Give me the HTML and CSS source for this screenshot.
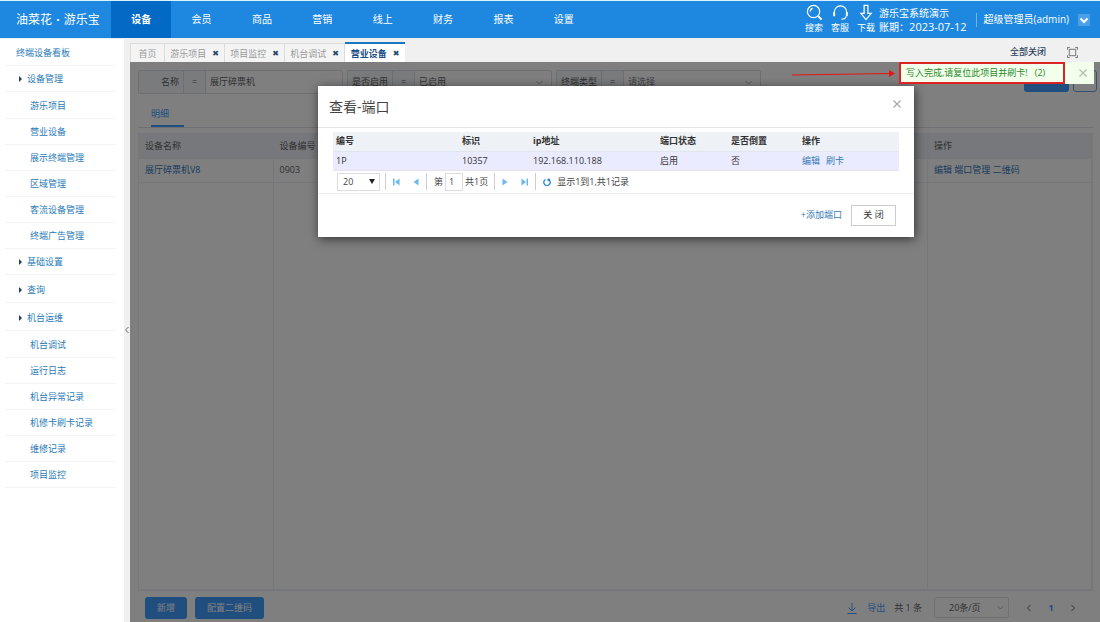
FILE: index.html
```html
<!DOCTYPE html>
<html lang="zh-CN">
<head>
<meta charset="utf-8">
<meta name="viewport" content="width=device-width, initial-scale=1">
<title>油菜花 · 游乐宝</title>
<link rel="stylesheet" href="styles.css">
</head>
<body>
<header class="topbar">
  <div class="brand">油菜花 <span class="dot">·</span> 游乐宝</div>
  <nav class="mainnav">
    <a href="#" class="active">设备</a><a href="#">会员</a><a href="#">商品</a><a href="#">营销</a><a href="#">线上</a><a href="#">财务</a><a href="#">报表</a><a href="#">设置</a>
  </nav>
  <div class="tools">
    <a href="#" class="tool"><svg viewBox="0 0 18 18"><circle cx="8" cy="8" r="6.5"/><path d="M4.5 8A3.5 3.5 0 0 1 7 4.6"/><path class="thick" d="M13 13l3.500 3.500"/></svg>搜索</a>
    <a href="#" class="tool"><svg viewBox="0 0 18 18"><path d="M2.500 11V8.500a6.500 6.500 0 0 1 13 0V11"/><path class="thick" d="M2.300 8.500v4.500M15.700 8.500v4.500"/><path d="M15 13c-.5 2-2.500 3-5 3"/></svg>客服</a>
    <a href="#" class="tool"><svg viewBox="0 0 18 18"><path d="M6.500 1.500h4v8.500h3.500L8.500 16.500 3 10h3.500z"/></svg>下载</a>
  </div>
  <div class="tenant"><div>游乐宝系统演示</div><div>账期：<span class="date">2023-07-12</span></div></div>
  <div class="user">超级管理员(admin)</div>
  <button class="usermenu" aria-label="用户菜单"><svg viewBox="0 0 12 12"><path d="M2.500 4.500L6 8l3.500-3.500"/></svg></button>
</header>
<div class="layout">
  <aside class="sidebar">
    <ul>
      <li><a href="#" class="root">终端设备看板</a></li>
      <li><a href="#" class="group">设备管理</a>
        <ul class="sub">
          <li><a href="#">游乐项目</a></li>
          <li><a href="#">营业设备</a></li>
          <li><a href="#">展示终端管理</a></li>
          <li><a href="#">区域管理</a></li>
          <li><a href="#">客流设备管理</a></li>
          <li><a href="#">终端广告管理</a></li>
        </ul>
      </li>
      <li><a href="#" class="group">基础设置</a></li>
      <li class="spaced"><a href="#" class="group">查询</a></li>
      <li class="spaced"><a href="#" class="group">机台运维</a>
        <ul class="sub">
          <li><a href="#">机台调试</a></li>
          <li><a href="#">运行日志</a></li>
          <li><a href="#">机台异常记录</a></li>
          <li><a href="#">机修卡刷卡记录</a></li>
          <li><a href="#">维修记录</a></li>
          <li><a href="#">项目监控</a></li>
        </ul>
      </li>
    </ul>
  </aside>
  <button class="splitter" aria-label="收起菜单"><svg viewBox="0 0 6 8"><path d="M4.500 1L1.500 4l3 3"/></svg></button>
  <main class="main">
    <div class="tabs">
      <div class="tab home"><a href="#">首页</a></div>
      <div class="tab"><a href="#">游乐项目</a><button aria-label="关闭游乐项目">✖</button></div>
      <div class="tab"><a href="#">项目监控</a><button aria-label="关闭项目监控">✖</button></div>
      <div class="tab"><a href="#">机台调试</a><button aria-label="关闭机台调试">✖</button></div>
      <div class="tab current"><a href="#">营业设备</a><button aria-label="关闭营业设备">✖</button></div>
      <button class="closeall">全部关闭</button>
      <button class="fullscreen" aria-label="全屏"><svg viewBox="0 0 12 12"><path d="M2.500 2.500h7v7h-7zM.500 3V.500H3M9 .500h2.500V3M11.500 9v2.500H9M3 11.500H.500V9"/></svg></button>
    </div>
    <section class="workspace">
      <form class="filters">
        <div class="field"><label for="f-name">名称</label><span class="op">=</span><input id="f-name" type="text" value="展厅碎票机"></div>
        <div class="field"><label for="f-on">是否启用</label><span class="op">=</span><select id="f-on"><option>已启用</option></select></div>
        <div class="field"><label for="f-type">终端类型</label><span class="op">=</span><select id="f-type" class="empty"><option>请选择</option></select></div>
        <div class="actions"><button type="button" class="primary" aria-label="查询"></button><button type="button" class="more" aria-label="更多"></button></div>
      </form>
      <div class="detailtabs"><a href="#">明细</a></div>
      <div class="grid">
        <table>
          <colgroup><col class="c-name"><col><col class="c-ops"></colgroup>
          <thead><tr><th>设备名称</th><th>设备编号</th><th>操作</th></tr></thead>
          <tbody>
            <tr><td><a href="#">展厅碎票机V8</a></td><td>0903</td><td><a href="#">编辑</a> <a href="#">端口管理</a> <a href="#">二维码</a></td></tr>
            <tr class="filler"><td></td><td></td><td></td></tr>
          </tbody>
        </table>
      </div>
      <footer class="gridfoot">
        <button class="primary">新增</button><button class="primary">配置二维码</button>
        <div class="paging">
          <a href="#" class="export"><svg viewBox="0 0 10 12"><path d="M5 1v8M1.500 5.500L5 9l3.500-3.500M.500 11.500h9"/></svg>导出</a>
          <span>共 1 条</span>
          <select aria-label="每页条数"><option>20条/页</option></select>
          <button aria-label="上一页"><svg viewBox="0 0 6 8"><path d="M4.500 1L1.500 4l3 3"/></svg></button>
          <b>1</b>
          <button aria-label="下一页"><svg viewBox="0 0 6 8"><path d="M1.500 1l3 3-3 3"/></svg></button>
        </div>
      </footer>
      <div class="overlay">
        <div class="modal" role="dialog" aria-labelledby="dlg-title">
          <div class="modalhead"><h2 id="dlg-title">查看-端口</h2><button aria-label="关闭对话框"><svg viewBox="0 0 8 8"><path d="M.500 .500l7 7M7.500 .500l-7 7"/></svg></button></div>
          <div class="modalbody">
            <table class="ports">
              <colgroup><col class="p1"><col class="p2"><col class="p3"><col class="p2"><col class="p2"><col></colgroup>
              <thead><tr><th>编号</th><th>标识</th><th>ip地址</th><th>端口状态</th><th>是否倒置</th><th>操作</th></tr></thead>
              <tbody><tr><td>1P</td><td>10357</td><td>192.168.110.188</td><td>启用</td><td>否</td><td><a href="#">编辑</a><a href="#">刷卡</a></td></tr></tbody>
            </table>
            <div class="pager">
              <select aria-label="每页行数"><option>20</option></select>
              <i></i>
              <button aria-label="首页"><svg viewBox="0 0 8 8"><path d="M1 .500h1.500v7H1zM7.500 .500v7L3 4z"/></svg></button>
              <button aria-label="上一页"><svg viewBox="0 0 8 8"><path d="M6.500 .500v7L1.500 4z"/></svg></button>
              <i></i>
              <label class="pageno">第<input type="text" value="1"></label><span class="total">共1页</span>
              <i></i>
              <button aria-label="下一页"><svg viewBox="0 0 8 8"><path d="M1.500 .500v7L6.500 4z"/></svg></button>
              <button aria-label="末页"><svg viewBox="0 0 8 8"><path d="M5.500 .500H7v7H5.500zM.500 .500v7L5 4z"/></svg></button>
              <i></i>
              <button class="reload" aria-label="刷新"><svg viewBox="0 0 8 8"><path d="M2.500 1.500A3.200 3.200 0 1 0 5.500 1.500M5.200 3.200V1.300H7.200"/></svg></button>
              <span class="summary">显示1到1,共1记录</span>
            </div>
          </div>
          <div class="modalfoot"><a href="#">+添加端口</a><button>关 闭</button></div>
        </div>
      </div>
      <svg class="arrow" viewBox="0 0 106 10"><path d="M1 6L100 4.500" stroke="#e81414" fill="none"/><path d="M98 1l6 3.500-6 3.500z" fill="#e81414" stroke="none"/></svg>
      <div class="toast" role="status"><div class="message">写入完成,请复位此项目并刷卡!&nbsp;&nbsp; (2)</div><button aria-label="关闭提示"><svg viewBox="0 0 8 8"><path d="M.500 .500l7 7M7.500 .500l-7 7"/></svg></button></div>
    </section>
  </main>
</div>
</body>
</html>
```

FILE: styles.css
```css
* { box-sizing: border-box; }
body {
  margin: 0; height: 100vh; display: flex; flex-direction: column; overflow: hidden;
  font: 9px/12px "Open Sans", "Noto Sans CJK SC", sans-serif; color: #333; background: #fff;
}
a { color: #337ab7; text-decoration: none; }
ul { list-style: none; margin: 0; padding: 0; }
button, input, select { font: inherit; color: inherit; margin: 0; padding: 0; border: 0; background: none; border-radius: 0; }
select { appearance: none; }
svg { display: block; fill: none; stroke: currentColor; }
table { border-collapse: collapse; width: 100%; table-layout: fixed; }
th, td { text-align: left; font-weight: normal; }

.topbar { display: flex; flex: none; height: 38px; align-items: stretch; background: #1e88e1; color: #fff; border-top: 1px solid #d9f3fd; }
.brand { width: 111px; padding-left: 16px; font-size: 12px; line-height: 37px; white-space: nowrap; }
.dot { margin: 0 1px; font-weight: bold; }
.mainnav { display: flex; width: 483px; margin-right: auto; }
.mainnav a { flex: 1; text-align: center; color: #fff; font-size: 10px; line-height: 37px; }
.mainnav .active { background: #0269c4; font-weight: bold; }
.tools { display: flex; gap: 8px; }
.tool { display: flex; flex-direction: column; align-items: center; color: #fff; gap: 1px; padding-top: 3px; }
.tool svg { width: 17px; height: 17px; stroke-width: 1.3; }
.tool .thick { stroke-width: 2; }
.tenant { padding: 5px 9px 0 4px; font-size: 10px; line-height: 14px; white-space: nowrap; }
.date { font-size: 11px; }
.user { align-self: center; height: 14px; padding-left: 7px; border-left: 1px solid #6fb4ee; font-size: 10px; line-height: 12px; white-space: nowrap; }
.usermenu { align-self: center; margin: 0 10px 0 9px; width: 12px; height: 12px; background: #4ba0ea; }
.usermenu svg { stroke-width: 2; }

.layout { display: flex; flex: 1; min-height: 0; }
.sidebar { width: 124px; flex: none; padding: 1px 8px 0 5px; border-top: 1px solid #e6f1fa; }
.sidebar a { display: block; height: 26px; padding-top: 1px; line-height: 24px; color: #2a7ab8; border-bottom: 1px solid #f3f4f5; }
.sidebar .root { padding-left: 11px; }
.sidebar .group { display: flex; align-items: center; gap: 5px; padding-left: 14px; }
.group::before { content: ""; border-left: 3px solid #1d4260; border-top: 3px solid transparent; border-bottom: 3px solid transparent; }
.sub { padding-top: 1px; }
.sub a { padding-left: 25px; }
.spaced { padding-top: 2px; }
.splitter { width: 6px; flex: none; background: #f0f0f0; color: #666; }
.splitter svg { width: 6px; height: 8px; }

.main { flex: 1; min-width: 0; display: flex; flex-direction: column; }
.tabs { display: flex; flex: none; align-items: flex-end; height: 24px; background: #f0f0f0; }
.tab { display: flex; align-items: center; justify-content: center; gap: 6px; width: 60px; height: 19px; border: 1px solid #dcdcdc; border-left: 0; border-bottom: 0; background: #f4f4f4; padding-top: 2px; }
.tab.home { width: 35px; border-left: 1px solid #dcdcdc; }
.tab a { color: #999; }
.tab button { font: 8px/10px "DejaVu Sans", sans-serif; color: #24496b; }
.tab.current { height: 20px; background: #fff; border: 0; border-top: 2px solid #1976c0; }
.tab.current a { color: #1d4e86; font-weight: bold; }
.closeall { margin: 0 0 4px auto; color: #2b3f5c; font-weight: 500; }
.fullscreen { margin: 0 22px 4px 21px; color: #666; }
.fullscreen svg { width: 11px; height: 11px; }

.workspace { position: relative; flex: 1; display: flex; flex-direction: column; min-height: 0; padding: 8px 7px 0 8px; color: #606266; background: #fff; }
.filters { display: flex; gap: 4px; }
.field { display: flex; width: 205px; height: 24px; border: 1px solid #dcdfe6; border-radius: 2px; line-height: 22px; }
.field label { width: 45px; text-align: right; padding-right: 4px; background: #f5f7fa; border-right: 1px solid #dcdfe6; }
.op { width: 22px; text-align: center; background: #f5f7fa; border-right: 1px solid #dcdfe6; }
.field input, .field select { flex: 1; min-width: 0; padding-left: 4px; }
.field select, .paging select {
  background: no-repeat right 8px center / 7px 5px url("data:image/svg+xml,%3Csvg xmlns='http://www.w3.org/2000/svg' viewBox='0 0 7 5' fill='none' stroke='%23b0b4bc'%3E%3Cpath d='M.5 1l3 3 3-3'/%3E%3C/svg%3E");
}
.field .empty { color: #80848c; }
.actions { display: flex; gap: 4px; margin: 0 -4px 0 auto; }
.primary { height: 22px; padding: 0 12px; border-radius: 3px; background: #409eff; color: #fff; }
.actions .primary { width: 45px; }
.more { width: 24px; height: 22px; border: 1px solid #6aa5e0; border-radius: 3px; }
.detailtabs { margin-top: 8px; padding-left: 13px; border-bottom: 1px solid #dde1e8; }
.detailtabs a { display: block; width: 33px; height: 25px; line-height: 24px; border-bottom: 2px solid #409eff; color: #409eff; }
.grid { flex: 1; display: flex; margin-top: 5px; border: 1px solid #ebeef5; }
.grid table { height: 100%; }
.grid tr { height: 24px; }
.grid .filler { height: auto; }
.grid th, .grid td { padding: 0 6px; border-right: 1px solid #ebeef5; border-bottom: 1px solid #ebeef5; }
.grid th { background: #eef1f6; }
.grid a { color: #3579bd; }
.c-name { width: 134px; }
.c-ops { width: 164px; }
.gridfoot { display: flex; flex: none; align-items: center; gap: 8px; height: 31px; padding: 2px 0 0 7px; }
.paging { display: flex; align-items: center; margin-left: auto; padding-right: 17px; }
.export { display: flex; align-items: center; gap: 10px; margin-right: 9px; color: #409eff; }
.export svg { width: 10px; height: 12px; }
.paging select { width: 75px; height: 21px; margin: 0 17px 0 12px; padding-left: 14px; border: 1px solid #dcdfe6; border-radius: 2px; background-position: right 4px center; }
.paging b { width: 38px; text-align: center; color: #409eff; }
.paging svg { stroke-width: 1; }
.paging button svg { width: 6px; height: 8px; }

.overlay { position: absolute; inset: 0; padding-left: 2px; background: rgba(0, 0, 0, .5); }
.modal { width: 596px; max-width: 100%; margin: 24px auto 0; background: #fff; color: #333; box-shadow: 1px 2px 10px rgba(0, 0, 0, .6); }
.modalhead { display: flex; align-items: center; justify-content: space-between; height: 42px; padding: 0 13px 0 11px; border-bottom: 1px solid #e5e5e5; }
.modalhead h2 { margin: 0; font-size: 14px; line-height: 20px; font-weight: normal; color: #444; }
.modalhead button { margin-bottom: 5px; color: #aaa; }
.modalhead svg, .toast svg { width: 8px; height: 8px; stroke-width: 1.3; }
.modalbody { padding: 4px 15px 0; border-bottom: 1px solid #ececec; }
.ports th, .ports td { height: 19px; padding: 0 3px; border-bottom: 1px solid #e2e4ee; }
.ports th { background: #eef1f6; font-weight: bold; }
.ports td { background: #ebebff; }
.ports a { margin-right: 6px; }
.p1 { width: 126px; }
.p2 { width: 71px; }
.p3 { width: 127px; }
.pager { display: flex; align-items: center; height: 22px; padding-left: 4px; color: #444; }
.pager i { width: 1px; height: 17px; background: #ccc; }
.pager select { width: 43px; height: 18px; margin-right: 5px; padding-left: 5px; border: 1px solid #ddd;
  background: no-repeat right 4px center / 6px 5px url("data:image/svg+xml,%3Csvg xmlns='http://www.w3.org/2000/svg' viewBox='0 0 6 5'%3E%3Cpath d='M0 0h6L3 5z' fill='%23222'/%3E%3C/svg%3E"); }
.pager button { margin: 0 6px; color: #6cb8ea; }
.pager button svg { width: 8px; height: 8px; fill: currentColor; stroke: none; }
.pager .reload { margin: 0 6px 0 7px; color: #2288cc; }
.pager .reload svg { fill: none; stroke: currentColor; stroke-width: 1.3; }
.pageno { display: flex; align-items: center; margin-left: 7px; }
.pageno input { width: 18px; height: 18px; margin-left: 2px; padding-left: 3px; border: 1px solid #ddd; }
.total { margin: 0 6px 0 2px; }
.modalfoot { display: flex; align-items: center; justify-content: flex-end; gap: 9px; height: 43px; padding-right: 18px; }
.modalfoot button { width: 45px; height: 21px; border: 1px solid #ccc; }

.arrow { position: absolute; top: 7px; right: 203px; width: 106px; height: 10px; }
.toast { position: absolute; top: 0; right: 6px; display: flex; align-items: center; background: #f2ffea; }
.message { height: 22px; width: 166px; padding-left: 5px; border: 2px solid #dc2323; line-height: 18px; color: #2c8a2c; white-space: nowrap; }
.toast button { margin: 0 7px 0 14px; color: #b4beb0; }
```
